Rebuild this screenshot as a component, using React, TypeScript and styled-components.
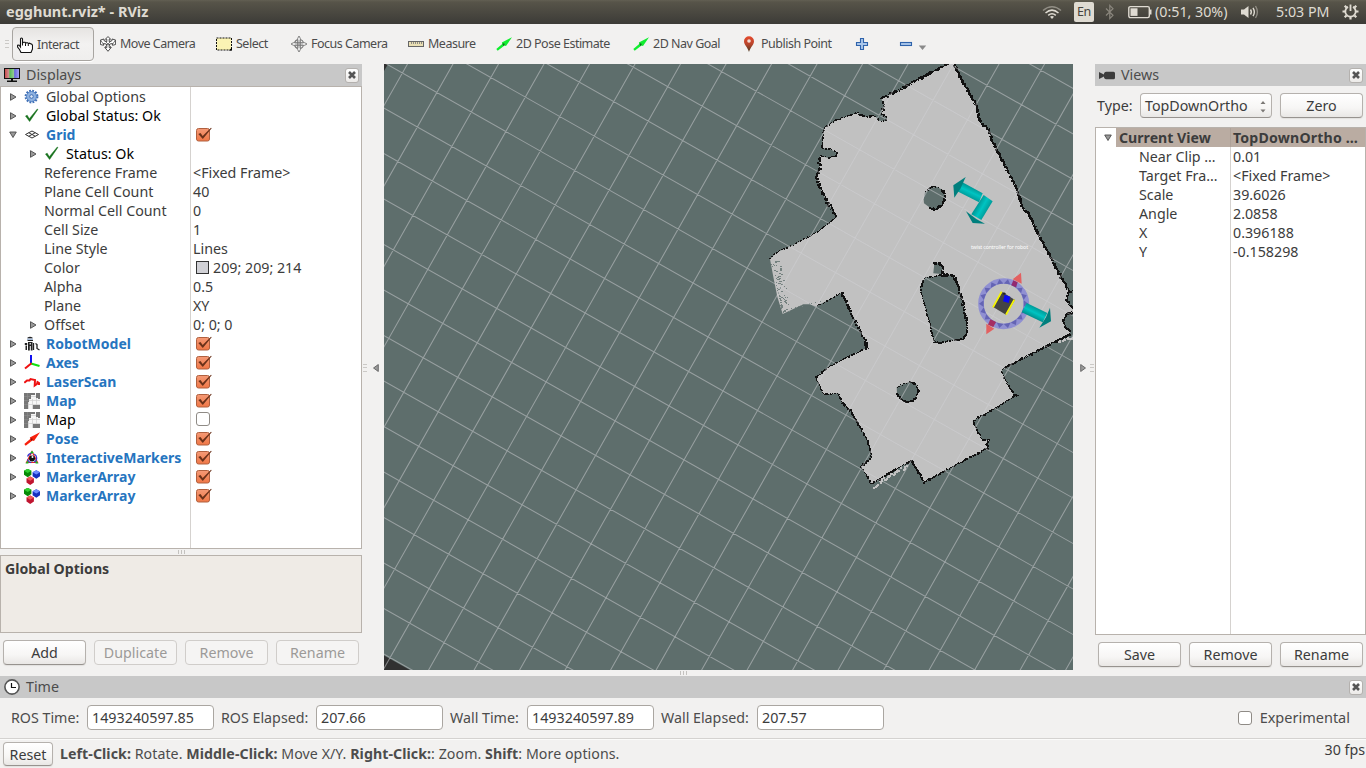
import React from "react";
import styled, { createGlobalStyle, css } from "styled-components";

const GlobalStyle = createGlobalStyle`
  html, body { margin: 0; padding: 0; }
  body { background: #f2f1f0; overflow: hidden; }
  * { box-sizing: border-box; }
`;

const Window = styled.div`
  width: 1366px;
  height: 768px;
  display: flex;
  flex-direction: column;
  background: #f2f1f0;
  color: #3c3c3c;
  font-family: "Noto Sans", "Open Sans", sans-serif;
  font-size: 14.25px;
  line-height: 19px;
  white-space: pre;
`;

const MenuBar = styled.header`
  height: 24px;
  flex: none;
  display: flex;
  justify-content: space-between;
  align-items: center;
  padding: 0 7px 1px 6px;
  color: #dfdbd2;
  background: linear-gradient(#625f53 0, #575449 2px, #3c3b37 24px);
`;
const WindowTitle = styled.span`
  font-weight: bold;
  font-size: 14.5px;
`;
const Tray = styled.div`
  display: flex;
  align-items: center;
  height: 23px;
`;
const TrayItem = styled.span<{ $w: number }>`
  width: ${(p) => p.$w}px;
  flex: none;
  display: flex;
  align-items: center;
`;
const LangBadge = styled.span`
  width: 20px;
  height: 20px;
  margin-top: 1px;
  border-radius: 2px;
  background: #dfdbd2;
  color: #45433d;
  font-size: 12.5px;
  line-height: 20px;
  letter-spacing: -0.3px;
  text-align: center;
`;

const ToolBar = styled.nav`
  height: 40px;
  flex: none;
  display: flex;
  align-items: center;
  padding-left: 5px;
`;
const Grip = styled.span<{ $vertical?: boolean }>`
  flex: none;
  ${(p) =>
    p.$vertical
      ? css`
          width: 4px;
          height: 8px;
          background: repeating-linear-gradient(#cbc9c6 0 1px, transparent 1px 3.4px);
        `
      : css`
          width: 8px;
          height: 4px;
          background: repeating-linear-gradient(90deg, #c4c2bf 0 1px, transparent 1px 3px);
        `}
`;
const Tool = styled.button<{ $w: number; $active?: boolean }>`
  width: ${(p) => p.$w}px;
  height: 34px;
  flex: none;
  display: flex;
  align-items: center;
  gap: 4px;
  padding: 0 0 1px;
  border: 0;
  background: none;
  color: #4c4c4c;
  font: 12.5px "Noto Sans", sans-serif;
  letter-spacing: -0.5px;
  white-space: pre;
  ${(p) =>
    p.$active &&
    css`
      margin: 0 6px 0 3px;
      padding: 1px 0 0 4px;
      border: 1px solid #a8a5a1;
      border-radius: 4px;
      background: linear-gradient(#e6e4e2, #f3f2f1 50%, #efeeed);
      box-shadow: 0 1px 0 #fff;
    `}
`;

const Workspace = styled.main`
  height: 606px;
  flex: none;
  display: flex;
`;
const Dock = styled.section<{ $w: number }>`
  width: ${(p) => p.$w}px;
  flex: none;
  display: flex;
  flex-direction: column;
`;
const DockTitle = styled.div`
  height: 22px;
  flex: none;
  display: flex;
  align-items: center;
  gap: 6px;
  padding: 0 3px 0 4px;
  background: #c8c8c8;
  color: #4c4c4c;
`;
const DockName = styled.span`
  padding-bottom: 2px;
`;
const CloseButton = styled.button`
  margin-left: auto;
  width: 14px;
  height: 15px;
  padding: 0;
  display: flex;
  align-items: center;
  justify-content: center;
  border: 1px solid #b4b1ae;
  border-radius: 3px;
  background: linear-gradient(#fff, #eceae8);
`;
const Gutter = styled.div<{ $side: "left" | "right" }>`
  width: 22px;
  flex: none;
  display: flex;
  align-items: center;
  justify-content: space-between;
  flex-direction: ${(p) => (p.$side === "left" ? "row" : "row-reverse")};
  padding: ${(p) => (p.$side === "left" ? "2px 5px 0 1px" : "2px 1px 0 7px")};
`;
const Viewport = styled.div`
  width: 689px;
  height: 606px;
  flex: none;
  overflow: hidden;
`;

const Tree = styled.div<{ $h: number; $split: number }>`
  height: ${(p) => p.$h}px;
  flex: none;
  border: 1px solid #b8b2ac;
  background: linear-gradient(#d5d2cf, #d5d2cf) ${(p) => p.$split}px 0 / 1px 100% no-repeat #fff;
`;
const TreeRow = styled.div`
  height: 19px;
  display: flex;
`;
const NameCell = styled.div<{ $w: number; $indent: number; $bold?: boolean; $color?: string }>`
  width: ${(p) => p.$w}px;
  flex: none;
  display: flex;
  align-items: center;
  padding-left: ${(p) => p.$indent}px;
  color: ${(p) => p.$color || "#3c3c3c"};
  ${(p) => p.$bold && "font-weight: bold; font-size: 14px;"}
`;
const ValueCell = styled.div`
  flex: 1;
  display: flex;
  align-items: center;
  padding-left: 3px;
`;
const ArrowBox = styled.span<{ $w: number }>`
  width: ${(p) => p.$w}px;
  flex: none;
  display: flex;
`;
const IconBox = styled.span<{ $w: number }>`
  width: ${(p) => p.$w}px;
  flex: none;
  display: flex;
`;
const Swatch = styled.span`
  width: 13px;
  height: 13px;
  margin: 0 4px 0 3px;
  border: 1px solid #333;
  background: #d1d1d6;
`;
const Box = styled.span`
  width: 14px;
  height: 14px;
  flex: none;
  border: 1px solid #8f8b86;
  border-radius: 3px;
  background: #fff;
`;
const BoxSlot = styled.span`
  display: flex;
  margin-left: 3px;
  height: 19px;
  padding-bottom: 2px;
  align-items: center;
`;
const SelectedName = styled.div`
  height: 19px;
  width: 115px;
  flex: none;
  padding-left: 3px;
  background: #baaca2;
  font-weight: bold;
  font-size: 14.15px;
  border-right: 1px solid #aea198;
`;
const SelectedValue = styled.div`
  flex: 1;
  padding-left: 2px;
  background: #baaca2;
  font-weight: bold;
  font-size: 14.15px;
  letter-spacing: 0.18px;
`;

const Splitter = styled.div<{ $h: number }>`
  height: ${(p) => p.$h}px;
  flex: none;
  display: flex;
  align-items: center;
  justify-content: center;
  padding-left: 2px;
`;
const Description = styled.div`
  height: 78px;
  flex: none;
  padding: 3px 4px;
  border: 1px solid #b8b2ac;
  background: #efebe6;
  font-weight: bold;
  font-size: 14.15px;
`;
const ButtonRow = styled.div`
  display: flex;
  gap: 8px;
  padding: 7px 3px 0;
`;
const Button = styled.button<{ $w?: number; $h?: number }>`
  width: ${(p) => p.$w || 83}px;
  height: ${(p) => p.$h || 25}px;
  flex: none;
  padding: 0;
  border: 1px solid #b5b1ad;
  border-bottom-color: #97938f;
  border-radius: 4px;
  background: linear-gradient(#fff, #f7f6f5 60%, #e9e7e5);
  box-shadow: 0 1px 1px #e2e0de;
  color: #3c3c3c;
  font: 14.25px/21px "Noto Sans", sans-serif;
  &:disabled {
    color: #9c9a98;
    border-color: #d0cdca;
    background: #f5f4f3;
    box-shadow: none;
  }
`;
const TypeRow = styled.div`
  height: 41px;
  flex: none;
  display: flex;
  align-items: flex-start;
  padding: 7px 3px 0 2px;
  line-height: 25px;
`;
const TypeLabel = styled.span`
  width: 43px;
`;
const Combo = styled.div`
  width: 132px;
  height: 25px;
  margin-right: 8px;
  padding: 0 4px 0 4px;
  display: flex;
  align-items: center;
  justify-content: space-between;
  border: 1px solid #b5b1ad;
  border-bottom-color: #97938f;
  border-radius: 4px;
  background: linear-gradient(#fff, #f7f6f5 60%, #e9e7e5);
`;
const BottomDock = styled.section`
  height: 62px;
  flex: none;
  display: flex;
  flex-direction: column;
`;
const TimeRow = styled.div`
  height: 40px;
  display: flex;
  align-items: center;
  padding: 0 16px 1px 11px;
  color: #4c4c4c;
`;
const FieldLabel = styled.label<{ $w: number }>`
  width: ${(p) => p.$w}px;
  flex: none;
`;
const Field = styled.div<{ $gap: number }>`
  width: 127px;
  height: 25px;
  flex: none;
  margin-right: ${(p) => p.$gap}px;
  padding-left: 4px;
  border: 1px solid #aaa6a1;
  border-radius: 4px;
  background: #fff;
  color: #3c3c3c;
  font-size: 14.3px;
  line-height: 23px;
`;
const Experimental = styled.label`
  margin-left: auto;
  display: flex;
  align-items: center;
  gap: 8px;
  font-size: 14.5px;
`;
const StatusBar = styled.footer`
  height: 30px;
  flex: none;
  display: flex;
  align-items: flex-start;
  padding: 3px 1px 0 3px;
  border-top: 1px solid #d4d2d0;
  box-shadow: inset 0 1px 0 #fbfbfa;
`;
const Hint = styled.p`
  margin: 2px 0 0 7px;
  color: #4c4c4c;
  font-size: 14.2px;
  letter-spacing: 0.06px;
`;
const Fps = styled.span`
  margin: -2px 0 0 auto;
`;

/* ---------- icons ---------- */

const Svg = ({ w = 16, h = 16, children }: { w?: number; h?: number; children: React.ReactNode }) => (
  <svg width={w} height={h} viewBox={`0 0 ${w} ${h}`} fill="none">{children}</svg>
);
const HandIcon = () => (
  <Svg>
    <path d="M3.500 10V1.800Q4.500.3 5.500 1.800V6L6.500 5.300H8l.7.900L10 5.600l1.400.9.900-.3 2.500 1.100.7.900V12L14 15.500H4L2.500 12.500.6 10V8.300l1.400-.3z" fill="#fff" stroke="#111" strokeWidth="1.100" />
    <path d="M5.500 6v2.500M8.500 6.500V9M11.300 7v2" stroke="#111" />
  </Svg>
);
const MoveIcon = () => (
  <Svg>
    <path d="M8 .6l2.600 2.500H9.200V5.700L12 4.700V3L15.600 4v4.500L12.500 9.300V7.500L9.800 8l-.6 1v2.600h1.900L8 15.300l-3.100-3.700h1.900V9L6.200 8 3.500 7.500v1.800L.4 8.500V4L4 3v1.700l2.800 1V3.100H5.400z" fill="#fff" stroke="#3b3b3b" strokeWidth=".9" />
    <path d="M.5 4l3.500 5M15.500 4L12 9M4.500 11.500L11 5M11.500 11.500L5 5" stroke="#555" strokeWidth=".8" />
  </Svg>
);
const SelectIcon = () => (
  <Svg>
    <rect x=".5" y="2" width="15" height="12" fill="#faf3b4" stroke="#111" strokeDasharray="2 1" />
    <path d="M13 14.500h3v-3z" fill="#000" />
  </Svg>
);
const FocusIcon = () => (
  <Svg>
    <circle cx="8" cy="8" r="4.600" stroke="#777" strokeWidth="1.200" />
    <path d="M8 0l1.400 2.500V13.500L8 16l-1.400-2.500V2.500zM0 8l2.500-1.400h11L16 8l-2.500 1.400h-11z" fill="#eee" stroke="#777" strokeWidth=".9" />
    <path d="M8 4v8M4 8h8" stroke="#888" strokeWidth=".8" />
  </Svg>
);
const MeasureIcon = () => (
  <Svg>
    <rect x=".5" y="5.500" width="15" height="5" fill="#eadfb4" stroke="#666" />
    <path d="M3.500 6v2M5.500 6v2M7.500 6v2M9.500 6v2M11.500 6v2M13.500 6v2" stroke="#777" strokeWidth=".8" />
  </Svg>
);
const SlashArrow = ({ color, dark }: { color: string; dark: string }) => (
  <Svg>
    <path d="M.3 13L6.500 7.800 5.800 6.600 16 1.200 10 10l-1.500-.6L1.700 14.800z" fill={color} />
    <path d="M6.300 7.200l2 .2.400 1.600-1.300 1z" fill={dark} />
  </Svg>
);
const PinIcon = () => (
  <Svg>
    <defs>
      <linearGradient id="pin" x1="0" y1="0" x2="0" y2="1">
        <stop offset="0" stopColor="#e5492c" /><stop offset=".5" stopColor="#b8452c" /><stop offset="1" stopColor="#4a3a20" />
      </linearGradient>
    </defs>
    <path d="M8 .3a5 5 0 0 1 5 5C13 9 9.500 11 8 16 6.500 11 3 9 3 5.300a5 5 0 0 1 5-5z" fill="url(#pin)" />
    <circle cx="8" cy="5" r="1.800" fill="#f3dcd5" />
  </Svg>
);
const PlusIcon = () => (
  <Svg>
    <path d="M6.500 2.500h3v4h4v3h-4v4h-3v-4h-4v-3h4z" fill="#a9c6ea" stroke="#2f63ab" strokeWidth="1.100" />
  </Svg>
);
const MinusIcon = () => (
  <Svg><rect x="2.500" y="6.500" width="11" height="3" fill="#a9c6ea" stroke="#2f63ab" strokeWidth="1.100" /></Svg>
);
const CaretDown = () => (
  <Svg w={9} h={16}><path d="M.8 9.500h7.400L4.500 14z" fill="#8a8a8a" /></Svg>
);
const MonitorIcon = () => (
  <Svg>
    <defs>
      <linearGradient id="scr" x1="0" x2="1">
        <stop offset="0" stopColor="#c44" /><stop offset=".32" stopColor="#c99" /><stop offset=".34" stopColor="#5b5" /><stop offset=".65" stopColor="#9c9" /><stop offset=".67" stopColor="#66d" /><stop offset="1" stopColor="#aae" />
      </linearGradient>
    </defs>
    <rect x=".5" y="1.500" width="15" height="10" fill="url(#scr)" stroke="#111" />
    <path d="M7 12h2v1.500h4V15H3v-1.500h4z" fill="#111" />
  </Svg>
);
const CamIcon = () => (
  <Svg>
    <path d="M0 5l5 2.500V6.500Q5.500 4.800 7 4.800h7.500Q16 4.800 16 6.300v4.400q0 1.500-1.500 1.500H7Q5.500 12.200 5 10.500V9.500L0 12z" fill="#3c3c3c" />
  </Svg>
);
const ClockIcon = () => (
  <Svg>
    <circle cx="8" cy="8" r="7.100" fill="#fff" stroke="#555" strokeWidth="1.600" />
    <path d="M7.500 4v4.500H12" stroke="#111" strokeWidth="1.200" />
  </Svg>
);
const CrossIcon = () => (
  <Svg w={8} h={8}><path d="M1 1l6 6M7 1L1 7" stroke="#555" strokeWidth="2.600" /></Svg>
);
const Disclosure = ({ open }: { open?: boolean }) => (
  <Svg w={8} h={8}>
    <path d={open ? "M.7 1h6.600L4 6.500z" : "M1.500.7v6.600L7 4z"} fill="#999" stroke="#4a4a4a" strokeWidth=".9" />
  </Svg>
);
const GearIcon = () => (
  <Svg>
    <circle cx="7.500" cy="7.500" r="5.900" stroke="#3f6fb5" strokeWidth="2" strokeDasharray="1.800 1.290" />
    <circle cx="7.500" cy="7.500" r="5" fill="#8fb2e0" stroke="#4f7fc2" />
    <circle cx="7.500" cy="7.500" r="1.800" fill="#dfe9f6" stroke="#3f6fb5" />
  </Svg>
);
const TickIcon = () => (
  <Svg><path d="M1.500 8L3.200 7.200l2.100 3.500L13.300 1l.6.400L5.600 13.500z" fill="#15701a" stroke="#15701a" strokeWidth=".5" /></Svg>
);
const GridIcon = () => (
  <Svg>
    <path d="M1.500 7.500L8 4l6.500 3.500L8 11zM4.700 5.700l6.500 3.500M11.300 5.700L4.700 9.300" stroke="#333" />
  </Svg>
);
const RobotIcon = () => (
  <Svg>
    <path d="M3.500 1.500Q6 .2 8.500 1.500v1h-5zM3.500 4h5.500v1H3.500z" fill="#222" />
    <path d="M3 2.500h6v1.500H3z" fill="#a9bdd8" />
    <path d="M.8 7h2.400v2H.8zM4 6h4.500v8.500H6.800V10h-1v4.500H4zM1.500 9.500H3v4.500H1.500z" fill="#222" />
    <path d="M9.500 7v7M11.500 7.500l1.500 1v4l2.500 1.500" stroke="#222" strokeWidth="1.300" />
    <path d="M5.500 7h1.500v1.500H5.500z" fill="#ddd" />
  </Svg>
);
const AxesIcon = () => (
  <Svg>
    <path d="M7 8.500V0" stroke="#1010f0" strokeWidth="2" />
    <path d="M7 8.500l8.500 2.500" stroke="#10e010" strokeWidth="2" />
    <path d="M7.500 8.200L1 13.500" stroke="#f01010" strokeWidth="2" />
  </Svg>
);
const LaserIcon = () => (
  <Svg><path d="M.3 8.800L3 6.500h2.500L6.500 5l4.500 1-.3 5.500 2.300-1.500.5-2L15 9v2" stroke="#ee1111" strokeWidth="2" /></Svg>
);
const MapIcon = () => (
  <Svg>
    <path d="M0 0h16v16H0z" fill="#f6f6f6" />
    <path d="M4.500 6v10M8.500 6v10M12.500 0v12M7 3.500h9M4 7.500h12M4 11.500h12" stroke="#cfcfcf" strokeWidth=".7" />
    <path d="M0 0h11v2H7v4H5v3H4v7H0zM12 0h4v6h-2V5h-2zM9 12h7v4H9z" fill="#777" />
    <path d="M0 3.500h6M0 7.500h5M0 11.500h4M3.500 0v6" stroke="#8f8f8f" strokeWidth=".6" />
  </Svg>
);
const MarkerIcon = () => (
  <Svg>
    <path d="M8 1.500L2.500 12.500h11z" stroke="#e22" strokeWidth="1.200" />
    <circle cx="8" cy="8" r="4.700" stroke="#33c" strokeWidth="1.200" strokeDasharray="5 3" />
    <path d="M8 .8l2 2.500H6zM1.500 13.500L4 10.500l.5 3zM14.500 13.500L12 10.500l-.5 3z" fill="#1b2" />
    <circle cx="8" cy="8.500" r="3" fill="#111" /><circle cx="8.500" cy="7" r="1" fill="#fff" />
  </Svg>
);
const Cube = ({ x, y, c, d }: { x: number; y: number; c: string; d: string }) => (
  <g transform={`translate(${x} ${y})`}>
    <path d="M0 2L3.700 0 7.400 2v4L3.700 8.500 0 6z" fill={d} /><path d="M0 2L3.700 0 7.400 2 3.700 4.200z" fill={c} />
  </g>
);
const CubesIcon = () => (
  <Svg>
    <Cube x={0} y={-0.2} c="#30d030" d="#078a07" /><Cube x={8.600} y={1.200} c="#6d8cff" d="#1530c0" /><Cube x={2.500} y={7.500} c="#f05a5a" d="#c01530" />
  </Svg>
);
const CheckedBox = () => (
  <Svg w={17} h={16}>
    <defs>
      <linearGradient id="cb" x1="0" y1="0" x2="0" y2="1"><stop offset="0" stopColor="#f59a76" /><stop offset="1" stopColor="#f07746" /></linearGradient>
    </defs>
    <rect x=".5" y="2.500" width="13" height="12.500" rx="2" fill="url(#cb)" stroke="#b0603f" />
    <path d="M2.300 8l2.200-1 2.200 3L15 1.700l.7.500L6.800 13z" fill="#6a3119" />
  </Svg>
);
const WifiIcon = () => (
  <Svg w={20} h={16}>
    <g stroke="#dfdbd2" strokeWidth="1.500">
      <path d="M1 6.500Q10-.8 19 6.500" opacity=".45" /><path d="M3.500 9Q10 3.300 16.500 9" /><path d="M6.200 11.400Q10 8 13.800 11.400" />
    </g>
    <path d="M8 12.800Q10 11.300 12 12.800L10 15z" fill="#dfdbd2" />
  </Svg>
);
const BluetoothIcon = () => (
  <Svg w={10} h={16}><path d="M1 4.500l7 6.800L4.800 14.500v-13L8 4.700l-7 6.800" stroke="#8a867d" strokeWidth="1.200" /></Svg>
);
const BatteryIcon = () => (
  <Svg w={25} h={14}>
    <rect x=".8" y="1.600" width="20.500" height="11" rx="1.500" stroke="#dfdbd2" strokeWidth="1.400" />
    <rect x="2.500" y="3.300" width="7" height="7.600" fill="#dfdbd2" /><path d="M22.500 4.500v5" stroke="#dfdbd2" strokeWidth="2" />
  </Svg>
);
const SoundIcon = () => (
  <Svg w={20} h={16}>
    <path d="M1 5.500h3L8.500 2v12L4 10.500H1z" fill="#dfdbd2" />
    <g stroke="#dfdbd2" strokeWidth="1.400"><path d="M10.500 5.500Q12.200 8 10.500 10.500" /><path d="M13 3.800Q15.700 8 13 12.200" /><path d="M15.500 2Q19.300 8 15.500 14" opacity=".45" /></g>
  </Svg>
);
const PowerIcon = () => (
  <Svg w={17} h={17}>
    <path d="M6 3.900A5.200 5.200 0 1 0 11 3.900" stroke="#dfdbd2" strokeWidth="1.800" />
    <path d="M8.500 1.500v6.500" stroke="#dfdbd2" strokeWidth="1.800" />
    <path d="M4.500 4.500L2.700 2.700M12.500 4.500l1.800-1.800M.5 8.500h3M13.500 8.500h3M4.500 12.500l-1.800 1.800M12.500 12.500l1.800 1.800M8.500 13.500v3" stroke="#dfdbd2" strokeWidth="2.200" />
  </Svg>
);
const SpinArrows = () => (
  <Svg w={8} h={16}><path d="M1.500 6L4 3l2.500 3zM1.500 11.500L4 14.500l2.500-3z" fill="#7b7875" /></Svg>
);
const CollapseArrow = ({ dir }: { dir: "left" | "right" }) => (
  <Svg w={6} h={8}><path d={dir === "left" ? "M5.300.5v7L.5 4z" : "M.7.5v7L5.500 4z"} fill="#9a9a9a" stroke="#555" strokeWidth=".8" /></Svg>
);

/* ---------- 3D view ---------- */

type Pt = [number, number];

const makeRandom = (seed: number) => () => {
  seed = (seed * 1664525 + 1013904223) % 4294967296;
  return seed / 4294967296;
};

// Occupied cells of the map: pixel squares scattered along a wall.
// Walls are given at three units per pixel, measured from (760, 60).
const wallCells = (pts: Pt[], weight: number, density: number, seed: number) => {
  const rnd = makeRandom(seed);
  let d = "";
  for (let i = 0; i + 1 < pts.length; i++) {
    const [x0, y0] = pts[i];
    const [x1, y1] = pts[i + 1];
    const n = Math.max(1, Math.ceil(Math.hypot(x1 - x0, y1 - y0) / 1.6));
    for (let k = 0; k < n; k++) {
      if (rnd() > density) continue;
      const x = 760 + (x0 + ((x1 - x0) * k) / n) / 3 + (rnd() - 0.5) * weight;
      const y = 60 + (y0 + ((y1 - y0) * k) / n) / 3 + (rnd() - 0.5) * weight;
      const s = rnd() < 0.4 * weight - 0.4 ? 2 : 1;
      d += `M${Math.round(x - s / 2)} ${Math.round(y - s / 2)}h${s}v${s}h-${s}z`;
    }
  }
  return d;
};

const NE: Pt[] = [[584, 12], [600, 50], [625, 95], [648, 135], [655, 165], [663, 190], [685, 208], [700, 250], [725, 300], [750, 345], [770, 385], [787, 440], [805, 460], [830, 510], [850, 550], [880, 608], [905, 655], [925, 692]];
const E1: Pt[] = [[939, 694], [925, 697], [921, 720], [928, 736], [942, 745]];
const E2: Pt[] = [[942, 757], [920, 762], [911, 780], [914, 800], [930, 814]];
const SE: Pt[] = [[930, 823], [860, 858], [790, 895], [728, 928]];
const SE2: Pt[] = [[725, 935], [742, 970], [762, 1005], [776, 1006], [763, 1008], [700, 1048], [638, 1083]];
const SE3: Pt[] = [[640, 1088], [654, 1115], [668, 1141], [690, 1140], [678, 1150], [683, 1165], [600, 1208], [492, 1267]];
const S: Pt[] = [[492, 1267], [472, 1230], [455, 1202]];
const S2: Pt[] = [[455, 1202], [400, 1232], [335, 1272], [303, 1220]];
const SW: Pt[] = [[303, 1220], [335, 1192], [326, 1150], [300, 1100], [272, 1052], [247, 1030], [235, 1000]];
const SW2: Pt[] = [[235, 1000], [215, 1002], [190, 1003], [175, 970], [168, 952]];
const W: Pt[] = [[168, 952], [200, 925], [260, 892], [325, 862]];
const W2: Pt[] = [[323, 862], [300, 810], [270, 750], [245, 698]];
const W3: Pt[] = [[245, 698], [210, 718], [170, 738]];
const W4: Pt[] = [[170, 740], [150, 733], [130, 733], [68, 762], [52, 710], [40, 650], [30, 597]];
const W5: Pt[] = [[30, 597], [50, 577], [100, 555], [165, 520], [230, 472]];
const W6: Pt[] = [[230, 468], [207, 435], [185, 395], [170, 352], [178, 325], [180, 287]];
const NOTCH: Pt[] = [[182, 287], [205, 294], [228, 288], [229, 278], [212, 268], [187, 265]];
const NW: Pt[] = [[187, 265], [188, 232], [193, 202], [230, 180], [290, 158]];
const N: Pt[] = [[292, 158], [315, 170], [345, 168], [358, 182], [380, 183], [380, 172], [366, 165], [366, 150], [374, 140], [365, 118]];
const N2: Pt[] = [[362, 116], [410, 95], [480, 55], [540, 24], [568, 12]];
const OUTLINE: Pt[] = [...NE, ...E1, ...E2, ...SE, ...SE2, ...SE3, ...S, ...S2, ...SW, ...SW2, ...W, ...W2, ...W3, ...W4, ...W5, ...W6, ...NOTCH, ...NW, ...N, ...N2];

const HOLE_A: Pt[] = [[491, 418], [495, 398], [510, 385], [530, 380], [548, 390], [556, 410], [545, 437], [526, 448], [510, 443], [492, 430]];
const HOLE_B: Pt[] = [[480, 685], [497, 652], [520, 651], [540, 645], [580, 646], [596, 680], [607, 725], [620, 780], [621, 820], [610, 838], [560, 843], [540, 850], [522, 845], [507, 780], [492, 730]];
const HOLE_C: Pt[] = [[523, 612], [538, 608], [549, 625], [543, 642], [520, 640]];
const HOLE_D: Pt[] = [[410, 982], [430, 972], [450, 966], [468, 972], [476, 992], [465, 1018], [445, 1028], [420, 1017], [411, 1000]];

const toPath = (pts: Pt[]) => "M" + pts.map(([x, y]) => `${(760 + x / 3).toFixed(1)} ${(60 + y / 3).toFixed(1)}`).join("L") + "Z";

// Each wall with its scatter width in pixels and how densely it is filled.
const WALLS: [Pt[], number, number][] = [
  [NE, 2.1, 1], [E1, 1.6, 1], [E2, 1.8, 1], [SE, 1.7, 1], [SE2, 1.2, 0.8], [SE3, 1.3, 0.85], [S, 1.5, 0.9], [S2, 1.2, 0.7],
  [SW, 1.4, 0.85], [SW2, 1.1, 0.65], [W, 1.2, 0.8], [W2, 2.4, 0.65], [W3, 1, 0.4], [W5, 1, 0.6], [W6, 2.6, 0.65],
  [NOTCH, 1.2, 0.45], [NW, 1.2, 0.7], [N, 1.5, 0.55], [N2, 1.9, 0.95],
  [HOLE_A.slice(1, 5), 1.3, 0.45], [HOLE_A.slice(4, 9), 1.8, 0.95],
  [HOLE_B.slice(0, 4), 1.2, 0.5], [HOLE_B.slice(3, 8), 2.2, 0.95], [HOLE_B.slice(7, 13), 1.4, 0.9], [[...HOLE_B.slice(12), HOLE_B[0]], 1.2, 0.7],
  [HOLE_C.slice(0, 4), 2, 0.9], [HOLE_D.slice(0, 3), 1, 0.35], [HOLE_D.slice(2, 5), 2, 0.95], [HOLE_D.slice(4, 9), 1.3, 0.8],
];
const wallPath = WALLS.map(([p, w, d], i) => wallCells(p, w, d, 17 + i * 31)).join("");

// Unexplored streaks inside the western alcove.
const streaks = (() => {
  const rnd = makeRandom(99);
  let d = "";
  for (let y = 261; y < 313; y++) {
    const left = 770 + ((y - 258) / 54) * 12;
    for (let k = 0; k < 3; k++) {
      if (rnd() < 0.5) {
        const w = rnd() < 0.4 ? 2 : 1;
        d += `M${Math.round(left + Math.pow(rnd(), 1.4) * 9)} ${y}h${w}v1h-${w}z`;
      }
    }
  }
  for (let x = 784; x < 822; x++) if (rnd() < 0.3) d += `M${x} ${Math.round(312 - (x - 784) * 0.3 - rnd() * 3)}h1v1h-1z`;
  return d;
})();
// Free cells seen through gaps in the southern walls.
const strays = wallCells([[340, 1288], [365, 1262], [410, 1235], [445, 1218]], 3, 0.4, 5) + wallCells([[885, 845], [912, 838], [939, 836]], 3.500, 0.6, 8);

const CELL = 39.603;
const UX = 0.8703 * CELL;
const UY = 0.4925 * CELL;
const ORIGIN: Pt = [987, 85.300];
const gridPath = (() => {
  let d = "";
  for (let i = -24; i <= 22; i++) {
    const px = ORIGIN[0] - UY * i;
    const py = ORIGIN[1] + UX * i;
    if (i <= 20) d += `M${px - UX * 40} ${py - UY * 40}L${px + UX * 40} ${py + UY * 40}`;
    const qx = ORIGIN[0] + UX * i;
    const qy = ORIGIN[1] + UY * i;
    d += `M${qx + UY * 40} ${qy - UX * 40}L${qx - UY * 40} ${qy + UX * 40}`;
  }
  return d;
})();

const RingTeeth = () => (
  <g fill="#6464b4">
    {Array.from({ length: 18 }, (_, i) => (
      <path key={i} d="M-10 -60L0 -74L10 -60z" transform={`rotate(${i * 20 - 10})`} />
    ))}
  </g>
);

const Scene = () => (
  <svg width="689" height="606" viewBox="384 64 689 606">
    <defs>
      <linearGradient id="shaftA" gradientUnits="userSpaceOnUse" x1="637" y1="383" x2="625" y2="409"><stop offset="0" stopColor="#009a98" /><stop offset=".5" stopColor="#00c4c2" /><stop offset="1" stopColor="#00a09e" /></linearGradient>
      <linearGradient id="shaftB" gradientUnits="userSpaceOnUse" x1="653" y1="434" x2="681" y2="450"><stop offset="0" stopColor="#009a98" /><stop offset=".5" stopColor="#00c4c2" /><stop offset="1" stopColor="#00a09e" /></linearGradient>
      <linearGradient id="shaftC" gradientUnits="userSpaceOnUse" x1="831" y1="744" x2="817" y2="772"><stop offset="0" stopColor="#009a98" /><stop offset=".5" stopColor="#00c4c2" /><stop offset="1" stopColor="#008f8d" /></linearGradient>
    </defs>
    <path d="M384 64h689v606H384z" fill="#5e6e6c" />
    <path d="M384 655.400L411 670.600H384zM384 64h4l-4 7z" fill="#303030" />
    <path d={toPath(OUTLINE)} fill="#c1c1c1" />
    {[HOLE_A, HOLE_B, HOLE_C, HOLE_D].map((h, i) => <path key={i} d={toPath(h)} fill="#5e6e6c" />)}
    <path d={streaks} fill="#74817f" shapeRendering="crispEdges" />
    <path d={strays} fill="#c1c1c1" shapeRendering="crispEdges" />
    <path d={wallPath} fill="#111" shapeRendering="crispEdges" />
    <path d={gridPath} stroke="#d1d1d6" strokeOpacity=".5" strokeWidth="1.050" fill="none" />
    <g transform="translate(760 60) scale(.33333)">
      <path d="M606 366L668 400 657 427 592 394z" fill="url(#shaftA)" />
      <path d="M617 351L580 376 583 413 602 385z" fill="#007f7d" />
      <path d="M671 405L698 424 664 480 634 463z" fill="url(#shaftB)" />
      <path d="M618 454L638 489 675 491 650 478z" fill="#007f7d" />
      <g transform="translate(731 731)">
        <circle r="68" fill="none" stroke="#9090d2" strokeWidth="17" />
        <RingTeeth />
      </g>
      <path d="M760 661L773 667 768 682 754 676z" fill="#93296f" />
      <path d="M783 638L758 658 785 671z" fill="#e36060" />
      <path d="M691 778L708 786 700 801 684 794z" fill="#a52e62" />
      <path d="M679 791L703 806 679 823z" fill="#e36060" />
      <path d="M727 696L765 720 738 764 698 740z" fill="#444" />
      <path d="M725 695L699 742M763 719L738 764" stroke="#f6f600" strokeWidth="5.500" />
      <path d="M734 704L751 710 746 729 729 724z" fill="#0a0af4" />
      <path d="M731 697L738 700 733 704 728 703z" fill="#222" />
      <path d="M800 729L862 759 848 787 785 757z" fill="url(#shaftC)" />
      <path d="M870 743L873 784 838 803 858 772z" fill="#007f7d" />
    </g>
    <text x="971" y="249" fill="#fff" fontSize="5.200" fontFamily="Noto Sans, sans-serif" textLength="57">twist controller for robot</text>
  </svg>
);

/* ---------- panels ---------- */

const BLUE = "#2675bf";

type Display = {
  name: string;
  icon?: React.ReactNode;
  arrow?: "open" | "closed";
  depth?: 0 | 1;
  color?: string;
  bold?: boolean;
  value?: React.ReactNode;
  check?: boolean;
};

const DISPLAYS: Display[] = [
  { name: "Global Options", icon: <GearIcon />, arrow: "closed" },
  { name: "Global Status: Ok", icon: <TickIcon />, arrow: "closed", color: "#000" },
  { name: "Grid", icon: <GridIcon />, arrow: "open", color: BLUE, bold: true, check: true },
  { name: "Status: Ok", icon: <TickIcon />, arrow: "closed", depth: 1, color: "#000" },
  { name: "Reference Frame", depth: 1, value: "<Fixed Frame>" },
  { name: "Plane Cell Count", depth: 1, value: "40" },
  { name: "Normal Cell Count", depth: 1, value: "0" },
  { name: "Cell Size", depth: 1, value: "1" },
  { name: "Line Style", depth: 1, value: "Lines" },
  { name: "Color", depth: 1, value: <><Swatch />209; 209; 214</> },
  { name: "Alpha", depth: 1, value: "0.5" },
  { name: "Plane", depth: 1, value: "XY" },
  { name: "Offset", depth: 1, arrow: "closed", value: "0; 0; 0" },
  { name: "RobotModel", icon: <RobotIcon />, arrow: "closed", color: BLUE, bold: true, check: true },
  { name: "Axes", icon: <AxesIcon />, arrow: "closed", color: BLUE, bold: true, check: true },
  { name: "LaserScan", icon: <LaserIcon />, arrow: "closed", color: BLUE, bold: true, check: true },
  { name: "Map", icon: <MapIcon />, arrow: "closed", color: BLUE, bold: true, check: true },
  { name: "Map", icon: <MapIcon />, arrow: "closed", color: "#000", check: false },
  { name: "Pose", icon: <SlashArrow color="#f8200c" dark="#8c1208" />, arrow: "closed", color: BLUE, bold: true, check: true },
  { name: "InteractiveMarkers", icon: <MarkerIcon />, arrow: "closed", color: BLUE, bold: true, check: true },
  { name: "MarkerArray", icon: <CubesIcon />, arrow: "closed", color: BLUE, bold: true, check: true },
  { name: "MarkerArray", icon: <CubesIcon />, arrow: "closed", color: BLUE, bold: true, check: true },
];

const DisplayRow = ({ item }: { item: Display }) => (
  <TreeRow>
    <NameCell $w={189} $indent={item.depth ? 28 : 8} $bold={item.bold} $color={item.color}>
      <ArrowBox $w={15}>{item.arrow && <Disclosure open={item.arrow === "open"} />}</ArrowBox>
      {item.icon && <IconBox $w={22}>{item.icon}</IconBox>}
      {item.name}
    </NameCell>
    <ValueCell>
      {item.check === undefined ? item.value : <BoxSlot>{item.check ? <CheckedBox /> : <Box />}</BoxSlot>}
    </ValueCell>
  </TreeRow>
);

const VIEW_PROPS: [string, string][] = [
  ["Near Clip …", "0.01"],
  ["Target Fra…", "<Fixed Frame>"],
  ["Scale", "39.6026"],
  ["Angle", "2.0858"],
  ["X", "0.396188"],
  ["Y", "-0.158298"],
];

const TIMES: [string, string, number, number][] = [
  ["ROS Time:", "1493240597.85", 76, 7],
  ["ROS Elapsed:", "207.66", 95, 7],
  ["Wall Time:", "1493240597.89", 77, 7],
  ["Wall Elapsed:", "207.57", 96, 0],
];

const TitleBar = ({ icon, name }: { icon: React.ReactNode; name: string }) => (
  <DockTitle>
    {icon}
    <DockName>{name}</DockName>
    <CloseButton aria-label="Close"><CrossIcon /></CloseButton>
  </DockTitle>
);

export default function App() {
  return (
    <Window>
      <GlobalStyle />
      <MenuBar>
        <WindowTitle>egghunt.rviz* - RViz</WindowTitle>
        <Tray>
          <TrayItem $w={32}><WifiIcon /></TrayItem>
          <TrayItem $w={31}><LangBadge>En</LangBadge></TrayItem>
          <TrayItem $w={23}><BluetoothIcon /></TrayItem>
          <TrayItem $w={27}><BatteryIcon /></TrayItem>
          <TrayItem $w={85}>(0:51, 30%)</TrayItem>
          <TrayItem $w={36}><SoundIcon /></TrayItem>
          <TrayItem $w={66}>5:03 PM</TrayItem>
          <PowerIcon />
        </Tray>
      </MenuBar>

      <ToolBar>
        <Grip $vertical />
        <Tool $w={82} $active><HandIcon />Interact</Tool>
        <Tool $w={116}><MoveIcon />Move Camera</Tool>
        <Tool $w={75}><SelectIcon />Select</Tool>
        <Tool $w={117}><FocusIcon />Focus Camera</Tool>
        <Tool $w={88}><MeasureIcon />Measure</Tool>
        <Tool $w={137}><SlashArrow color="#10ee30" dark="#0a6d18" />2D Pose Estimate</Tool>
        <Tool $w={108}><SlashArrow color="#10ee30" dark="#0a6d18" />2D Nav Goal</Tool>
        <Tool $w={113}><PinIcon />Publish Point</Tool>
        <Tool $w={44}><PlusIcon /></Tool>
        <Tool $w={32}><MinusIcon /><CaretDown /></Tool>
      </ToolBar>

      <Workspace>
        <Dock $w={362}>
          <TitleBar icon={<MonitorIcon />} name="Displays" />
          <Tree $h={463} $split={189}>
            {DISPLAYS.map((d, i) => <DisplayRow key={i} item={d} />)}
          </Tree>
          <Splitter $h={6}><Grip /></Splitter>
          <Description>Global Options</Description>
          <ButtonRow>
            <Button>Add</Button>
            <Button disabled>Duplicate</Button>
            <Button disabled>Remove</Button>
            <Button disabled>Rename</Button>
          </ButtonRow>
        </Dock>
        <Gutter $side="left"><Grip $vertical /><CollapseArrow dir="left" /></Gutter>
        <Viewport><Scene /></Viewport>
        <Gutter $side="right"><Grip $vertical /><CollapseArrow dir="right" /></Gutter>
        <Dock $w={271}>
          <TitleBar icon={<CamIcon />} name="Views" />
          <TypeRow>
            <TypeLabel>Type:</TypeLabel>
            <Combo>TopDownOrtho<SpinArrows /></Combo>
            <Button>Zero</Button>
          </TypeRow>
          <Tree $h={508} $split={134}>
            <TreeRow>
              <NameCell $w={20} $indent={8}><Disclosure open /></NameCell>
              <SelectedName>Current View</SelectedName>
              <SelectedValue>TopDownOrtho …</SelectedValue>
            </TreeRow>
            {VIEW_PROPS.map(([k, v]) => (
              <TreeRow key={k}>
                <NameCell $w={134} $indent={43}>{k}</NameCell>
                <ValueCell>{v}</ValueCell>
              </TreeRow>
            ))}
          </Tree>
          <ButtonRow>
            <Button>Save</Button>
            <Button>Remove</Button>
            <Button>Rename</Button>
          </ButtonRow>
        </Dock>
      </Workspace>

      <Splitter $h={6}><Grip /></Splitter>

      <BottomDock>
        <TitleBar icon={<ClockIcon />} name="Time" />
        <TimeRow>
          {TIMES.map(([label, value, w, gap]) => (
            <React.Fragment key={label}>
              <FieldLabel $w={w}>{label}</FieldLabel>
              <Field $gap={gap}>{value}</Field>
            </React.Fragment>
          ))}
          <Experimental><Box />Experimental</Experimental>
        </TimeRow>
      </BottomDock>

      <StatusBar>
        <Button $w={50} $h={24}>Reset</Button>
        <Hint>
          <b>Left-Click:</b> Rotate. <b>Middle-Click:</b> Move X/Y. <b>Right-Click:</b>: Zoom. <b>Shift</b>: More options.
        </Hint>
        <Fps>30 fps</Fps>
      </StatusBar>
    </Window>
  );
}
